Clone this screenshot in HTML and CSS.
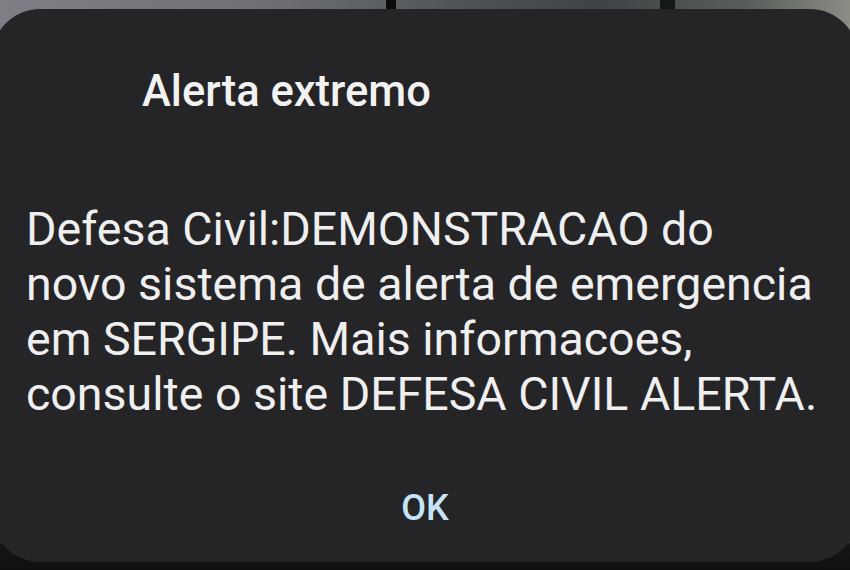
FILE: index.html
```html
<!DOCTYPE html>
<html lang="pt">
<head>
<meta charset="utf-8">
<title>Alerta extremo</title>
<link rel="stylesheet" href="styles.css">
</head>
<body>
<div class="backdrop">
  <div class="dialog">
    <h1 class="title">Alerta extremo</h1>
    <p class="message">Defesa Civil:DEMONSTRACAO do<br>novo sistema de alerta de emergencia<br>em SERGIPE. Mais informacoes,<br>consulte o site DEFESA CIVIL ALERTA.</p>
    <div class="actions"><button class="ok">OK</button></div>
  </div>
</div>
</body>
</html>
```
FILE: styles.css
```css
html, body {
  margin: 0;
  padding: 0;
  width: 850px;
  height: 570px;
  overflow: hidden;
}
body {
  background:
    linear-gradient(90deg, transparent 0, transparent 386px, #0b0b0d 386px, #0b0b0d 396px, transparent 396px, transparent 660px, #15181b 660px, #15181b 675px, transparent 675px),
    linear-gradient(90deg, #7d7f84 0%, #6f7176 30%, #4f5257 55%, #3f4246 70%, #5a5e5a 88%, #8a8d84 100%);
  font-family: Roboto, "Liberation Sans", sans-serif;
}
.backdrop {
  width: 850px;
  height: 570px;
  background: linear-gradient(180deg, transparent 0, transparent 530px, #141416 545px, #101012 570px);
  padding-top: 9px;
  box-sizing: border-box;
}
.dialog {
  margin: 0 -8px;
  height: 553px;
  background: #252527;
  border-radius: 48px;
  padding: 58px 34px 0 34px;
  box-sizing: border-box;
  display: flex;
  flex-direction: column;
}
.title {
  margin: 0;
  padding-left: 116px;
  font-size: 43.5px;
  line-height: 50px;
  font-weight: 500;
  color: #f2f2f3;
}
.message {
  margin: 84.5px 0 0 0;
  font-size: 46.5px;
  line-height: 55px;
  font-weight: 400;
  color: #efeff0;
  white-space: nowrap;
}
.actions {
  margin-top: 66px;
  display: flex;
  justify-content: center;
}
.ok {
  background: none;
  border: 0;
  padding: 0;
  font-family: Roboto, "Liberation Sans", sans-serif;
  font-size: 36px;
  line-height: 40px;
  font-weight: 500;
  color: #c6e4f8;
}
```
